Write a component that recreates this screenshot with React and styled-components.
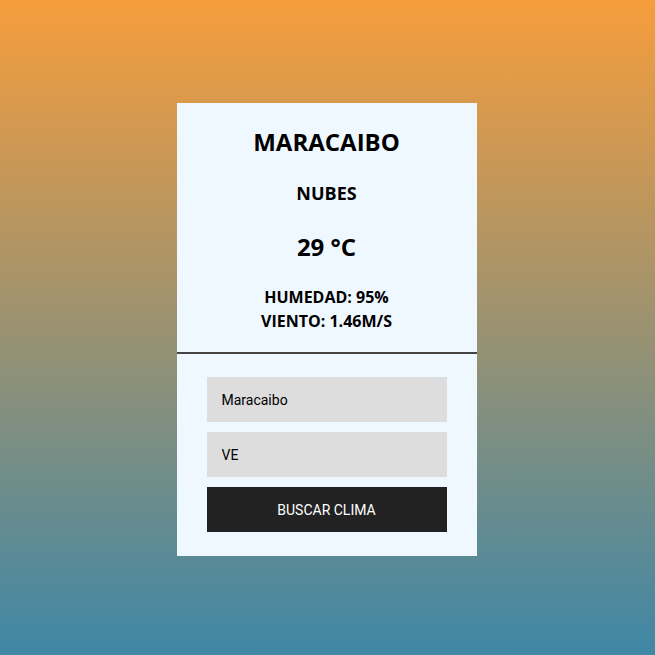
import React, { useState } from 'react'
import styled, { createGlobalStyle } from 'styled-components'

const GlobalStyle = createGlobalStyle`
  html, body {
    margin: 0;
    padding: 0;
  }
  body {
    font-family: "Open Sans", "Liberation Sans", sans-serif;
  }
`

const Page = styled.div`
  min-height: 655px;
  box-sizing: border-box;
  padding: 4px 2px 0 0;
  display: flex;
  align-items: center;
  justify-content: center;
  background: linear-gradient(#f69d3c, #3f87a6);
`

const Card = styled.div`
  width: 300px;
  background: #f0f8ff;
`

const Result = styled.div`
  padding: 24px 0 19px;
  text-align: center;
  color: #000;
  border-bottom: 2px solid #444;
`

const City = styled.h1`
  margin: 0;
  font-size: 24px;
  line-height: 30px;
  font-weight: 700;
  text-transform: uppercase;
`

const Sky = styled.h2`
  margin: 24px 0 0;
  font-size: 18px;
  line-height: 24px;
  font-weight: 700;
  text-transform: uppercase;
`

const Temp = styled.h2`
  margin: 27px 0 23px;
  font-size: 24px;
  line-height: 30px;
  font-weight: 700;
`

const Detail = styled.p`
  margin: 0;
  font-size: 16px;
  line-height: 24px;
  font-weight: 700;
  text-transform: uppercase;
`

const Form = styled.form`
  padding: 23px 30px 24px;
  display: flex;
  flex-direction: column;
  gap: 10px;
`

const Field = styled.input`
  height: 45px;
  box-sizing: border-box;
  border: none;
  outline: none;
  background: #ddd;
  padding: 0 15px;
  font-family: Roboto, "Liberation Sans", sans-serif;
  font-size: 14px;
  color: #000;
`

const Button = styled.button`
  height: 45px;
  border: none;
  background: #222;
  color: #fff;
  font-family: Roboto, "Liberation Sans", sans-serif;
  font-size: 14px;
  text-transform: uppercase;
  cursor: pointer;
`

export default function App() {
  const [city, setCity] = useState('Maracaibo')
  const [country, setCountry] = useState('VE')

  return (
    <Page>
      <GlobalStyle />
      <Card>
        <Result>
          <City>Maracaibo</City>
          <Sky>Nubes</Sky>
          <Temp>29 °C</Temp>
          <Detail>Humedad: 95%</Detail>
          <Detail>Viento: 1.46m/s</Detail>
        </Result>
        <Form onSubmit={e => e.preventDefault()}>
          <Field value={city} onChange={e => setCity(e.target.value)} />
          <Field value={country} onChange={e => setCountry(e.target.value)} />
          <Button type="submit">Buscar clima</Button>
        </Form>
      </Card>
    </Page>
  )
}
